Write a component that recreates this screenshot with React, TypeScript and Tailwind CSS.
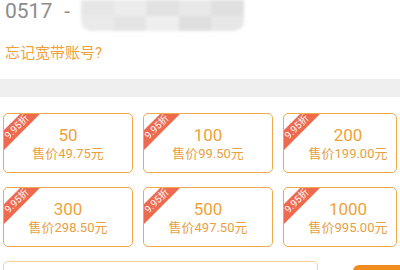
import React from "react";

const font = { fontFamily: '"Roboto", "Noto Sans CJK SC", sans-serif' };

const plans = [
  { amount: "50", price: "49.75" },
  { amount: "100", price: "99.50" },
  { amount: "200", price: "199.00" },
  { amount: "300", price: "298.50" },
  { amount: "500", price: "497.50" },
  { amount: "1000", price: "995.00" },
];

const mosaic = ["#e6e6e6", "#ececec", "#e2e2e2", "#e8e8e8", "#e0e0e0", "#eaeaea", "#e4e4e4", "#eeeeee", "#dfdfdf", "#e7e7e7"];

const PlanCard = ({ amount, price, last }: { amount: string; price: string; last: boolean }) => {
  return (
    <div
      className={
        "relative h-[60px] overflow-hidden rounded-[5px] border-[1.5px] border-[#f0aa4c] bg-white " +
        (last ? "w-[114px] pl-[16px]" : "w-[130px]")
      }
    >
      <div className="absolute left-[-22px] top-[6px] flex h-[14px] w-[70px] -rotate-45 items-center justify-center bg-[#ee6a4f] text-[10px] leading-none text-white">
        9.95折
      </div>
      <div className="flex h-full flex-col items-center justify-center">
        <div className="text-[17px] leading-[20px] text-[#efa23a]">{amount}</div>
        <div className="mt-[1px] text-[13px] leading-[16px] text-[#e9a043]">售价{price}元</div>
      </div>
    </div>
  );
};

const App = () => {
  return (
    <div className="h-[270px] w-[400px] overflow-hidden bg-white" style={font}>
      <div className="flex h-[35px] items-start">
        <span className="ml-[5px] text-[21px] leading-[22px] text-[#8c8c8c]">0517</span>
        <span className="ml-[12px] text-[21px] leading-[22px] text-[#8c8c8c]">-</span>
        <div className="ml-[11px] h-[31px] w-[163px] overflow-hidden rounded-b-[10px] blur-[1.5px]">
          <div className="grid grid-cols-5">
            {mosaic.map((c, i) => (
              <div key={i} className="h-[16px]" style={{ backgroundColor: c }} />
            ))}
          </div>
        </div>
      </div>
      <div className="ml-[5px] mt-[8px] text-[15px] leading-[20px] text-[#efa23c]">忘记宽带账号?</div>
      <div className="mt-[16px] h-[18px] bg-[#efefef]" />
      <div className="ml-[3px] mt-[16px] grid grid-cols-[130px_130px_114px] gap-x-[10px] gap-y-[14px]">
        {plans.map((p, i) => (
          <PlanCard key={p.amount} amount={p.amount} price={p.price} last={i % 3 === 2} />
        ))}
      </div>
      <div className="mt-[14px] flex items-start">
        <div className="ml-[3px] h-[20px] w-[315px] rounded-[5px] border border-[#f4cf9a]" />
        <div className="ml-[35px] mt-[4px] h-[20px] flex-1 rounded-tl-[6px] bg-[#f08c1e]" />
      </div>
    </div>
  );
};

export default App;
